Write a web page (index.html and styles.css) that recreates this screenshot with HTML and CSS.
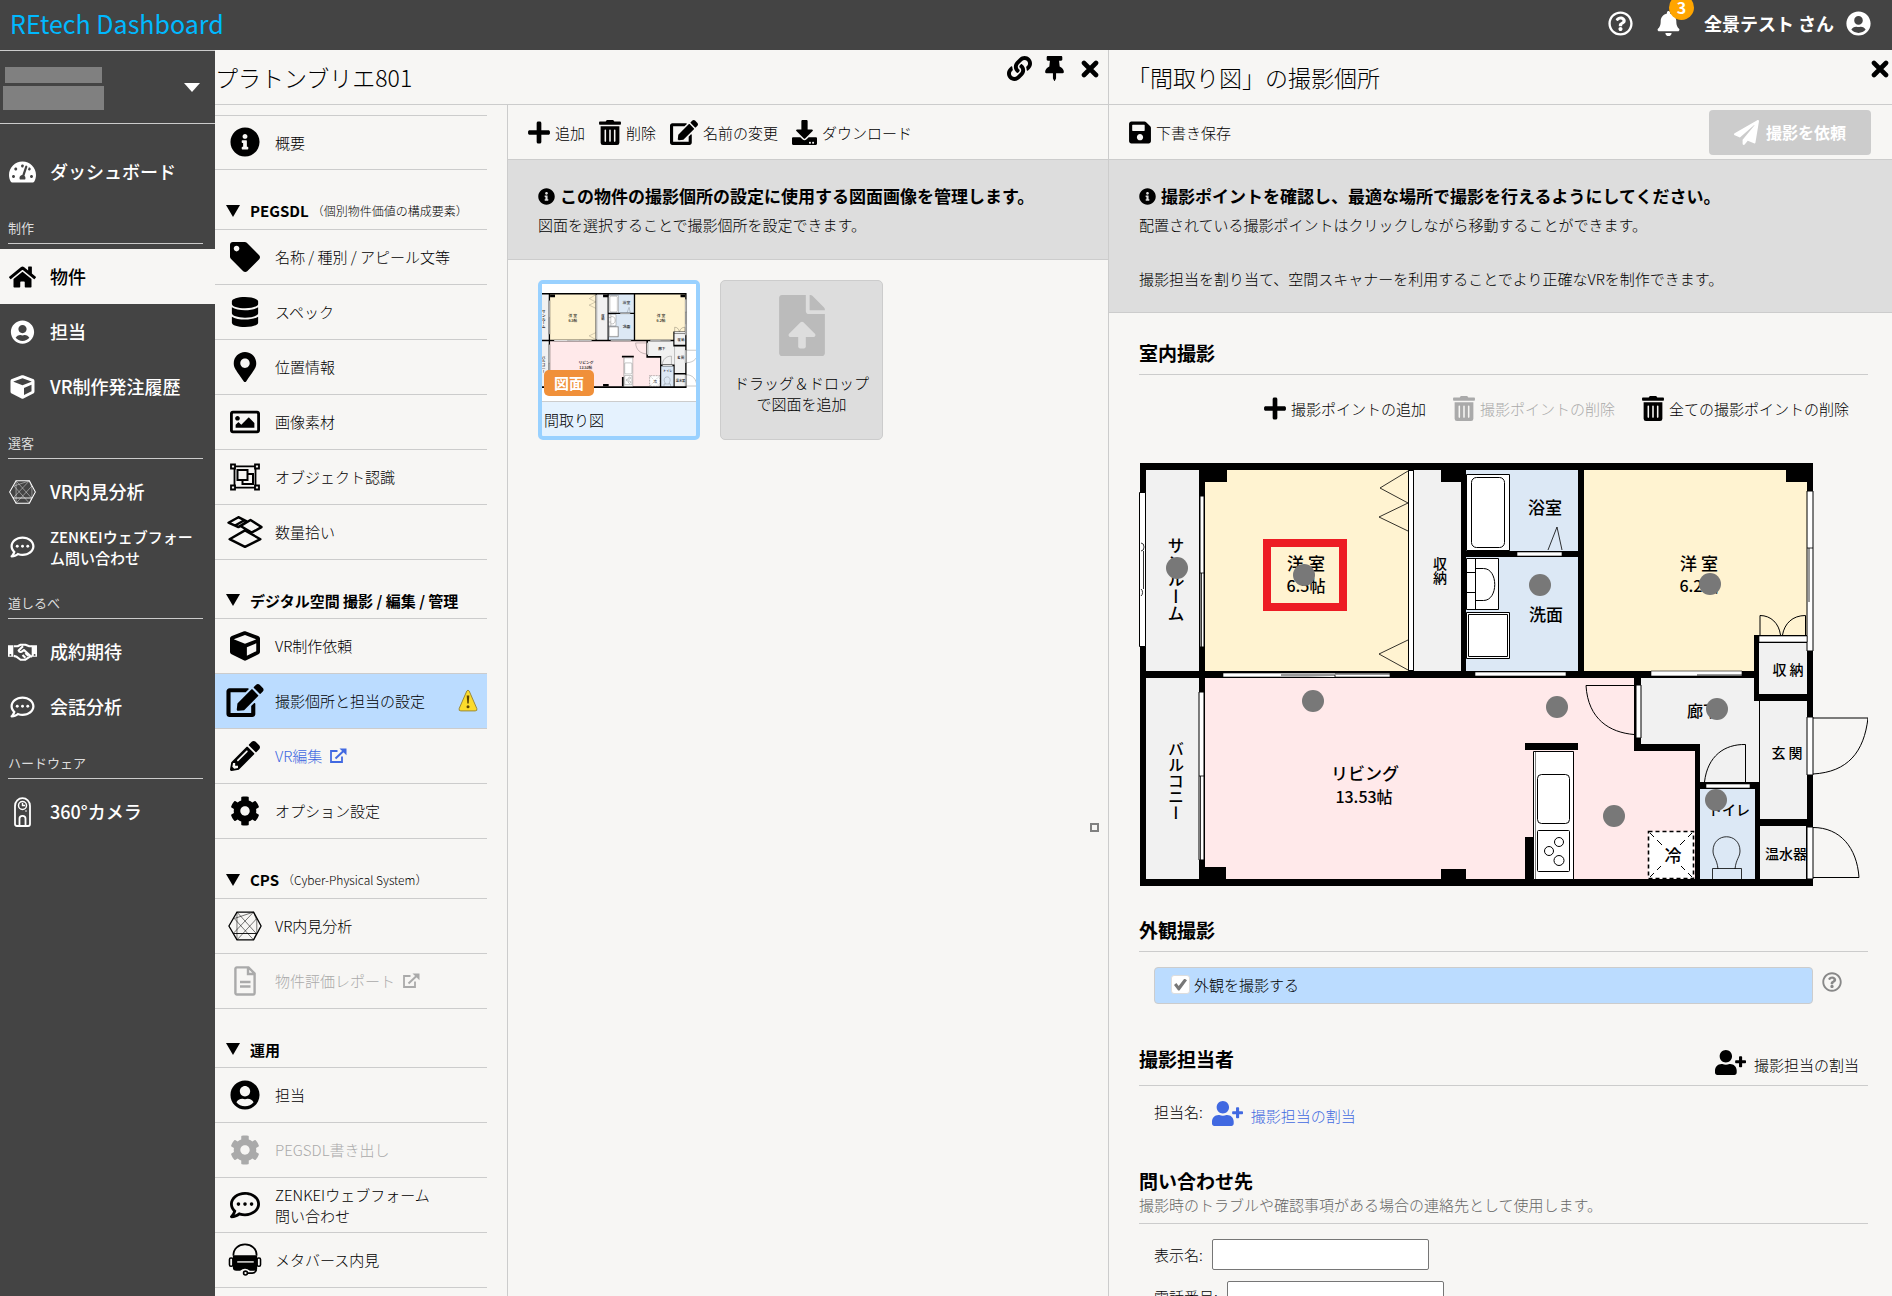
FILE: index.html
```html
<!DOCTYPE html>
<html lang="ja">
<head>
	<meta charset="UTF-8">
	<meta name="viewport" content="width=device-width, initial-scale=1">
	<title>REtech Dashboard</title>
	<link rel="stylesheet" href="styles.css">
</head>
<body>
	<!-- アイコン定義 -->
	<svg class="defs" aria-hidden="true">
		<symbol id="i-info" viewBox="0 0 512 512"><path d="M256 8C119.043 8 8 119.083 8 256c0 136.997 111.043 248 248 248s248-111.003 248-248C504 119.083 392.957 8 256 8zm0 110c23.196 0 42 18.804 42 42s-18.804 42-42 42-42-18.804-42-42 18.804-42 42-42zm56 254c0 6.627-5.373 12-12 12h-88c-6.627 0-12-5.373-12-12v-24c0-6.627 5.373-12 12-12h12v-64h-12c-6.627 0-12-5.373-12-12v-24c0-6.627 5.373-12 12-12h64c6.627 0 12 5.373 12 12v100h12c6.627 0 12 5.373 12 12v24z"/></symbol>
		<symbol id="i-tag" viewBox="0 0 512 512"><path d="M0 252.118V48C0 21.49 21.49 0 48 0h204.118a48 48 0 0 1 33.941 14.059l211.882 211.882c18.745 18.745 18.745 49.137 0 67.882L293.823 497.941c-18.745 18.745-49.137 18.745-67.882 0L14.059 286.059A48 48 0 0 1 0 252.118zM112 64c-26.51 0-48 21.49-48 48s21.49 48 48 48 48-21.49 48-48-21.49-48-48-48z"/></symbol>
		<symbol id="i-database" viewBox="0 0 448 512"><path d="M448 73.143v45.714C448 159.143 347.667 192 224 192S0 159.143 0 118.857V73.143C0 32.857 100.333 0 224 0s224 32.857 224 73.143zM448 176v102.857C448 319.143 347.667 352 224 352S0 319.143 0 278.857V176c48.125 33.143 136.208 48.572 224 48.572S399.874 209.143 448 176zm0 160v102.857C448 479.143 347.667 512 224 512S0 479.143 0 438.857V336c48.125 33.143 136.208 48.572 224 48.572S399.874 369.143 448 336z"/></symbol>
		<symbol id="i-marker" viewBox="0 0 384 512"><path d="M172.268 501.67C26.97 291.031 0 269.413 0 192 0 85.961 85.961 0 192 0s192 85.961 192 192c0 77.413-26.97 99.031-172.268 309.67-9.535 13.774-29.93 13.773-39.464 0zM192 272c44.183 0 80-35.817 80-80s-35.817-80-80-80-80 35.817-80 80 35.817 80 80 80z"/></symbol>
		<symbol id="i-image" viewBox="0 0 512 512"><path d="M464 64H48C21.49 64 0 85.49 0 112v288c0 26.51 21.49 48 48 48h416c26.51 0 48-21.49 48-48V112c0-26.51-21.49-48-48-48zm-6 336H54a6 6 0 0 1-6-6V118a6 6 0 0 1 6-6h404a6 6 0 0 1 6 6v276a6 6 0 0 1-6 6zM128 152c-22.091 0-40 17.909-40 40s17.909 40 40 40 40-17.909 40-40-17.909-40-40-40zM96 352h320v-80l-87.515-87.515c-4.686-4.686-12.284-4.686-16.971 0L192 304l-39.515-39.515c-4.686-4.686-12.284-4.686-16.971 0L96 304v48z"/></symbol>
		<symbol id="i-group" viewBox="0 0 30 30"><g fill="none" stroke="currentColor" stroke-width="1.8"><path d="M4.5 5.5v19M25.5 5.5v19M5 4.3h20M5 25.7h20"/><path d="M7.5 8h10v10h-10zM18 12h5v10H12.5v-4" stroke-width="2"/><path d="M1 2.5h4v4H1zM25 2.5h4v4h-4zM1 23.5h4v4H1zM25 23.5h4v4h-4z" fill="#f7f6f4"/></g></symbol>
		<symbol id="i-boxes" viewBox="0 0 34 30"><g fill="none" stroke="currentColor" stroke-width="2.2" stroke-linejoin="round"><path d="M2 7l9-5 8 4-8 5zM8 9.5L16 5M13 10l9-5.5L32 11l-9 5zM17 14l14 8-14 7-14-7z"/></g></symbol>
		<symbol id="i-cube" viewBox="0 0 512 512"><path d="M239.1 6.3l-208 78c-18.7 7-31.1 25-31.1 45v225.1c0 18.2 10.3 34.8 26.5 42.9l208 104c13.5 6.8 29.4 6.8 42.9 0l208-104c16.3-8.1 26.5-24.8 26.5-42.9V129.3c0-20-12.4-37.9-31.1-44.9l-208-78C262 2.2 250 2.2 239.1 6.3zM256 68.4l192 72v1.1l-192 78-192-78v-1.1l192-72zm32 356V275.5l160-65v133.9l-160 80z"/></symbol>
		<symbol id="i-edit" viewBox="0 0 576 512"><path d="M402.6 83.2l90.2 90.2c3.8 3.8 3.8 10 0 13.8L274.4 405.6l-92.8 10.3c-12.4 1.4-22.9-9.1-21.5-21.5l10.3-92.8L388.8 83.2c3.8-3.8 10-3.8 13.8 0zm162-22.9l-48.8-48.8c-15.2-15.2-39.9-15.2-55.2 0l-35.4 35.4c-3.8 3.8-3.8 10 0 13.8l90.2 90.2c3.8 3.8 10 3.8 13.8 0l35.4-35.4c15.2-15.3 15.2-40 0-55.2zM384 346.2V448H64V128h229.8c3.2 0 6.2-1.3 8.5-3.5l40-40c7.6-7.6 2.2-20.5-8.5-20.5H48C21.5 64 0 85.5 0 112v352c0 26.5 21.5 48 48 48h352c26.5 0 48-21.5 48-48V306.2c0-10.7-12.9-16-20.5-8.5l-40 40c-2.2 2.3-3.5 5.3-3.5 8.5z"/></symbol>
		<symbol id="i-pencil" viewBox="0 0 512 512"><path d="M497.9 142.1l-46.1 46.1c-4.7 4.7-12.3 4.7-17 0l-111-111c-4.7-4.7-4.7-12.3 0-17l46.1-46.1c18.7-18.7 49.1-18.7 67.9 0l60.1 60.1c18.8 18.7 18.8 49.1 0 67.9zM284.2 99.8L21.6 362.4.4 483.9c-2.9 16.4 11.4 30.6 27.8 27.8l121.5-21.3 262.6-262.6c4.7-4.7 4.7-12.3 0-17l-111-111c-4.8-4.7-12.4-4.7-17.1 0zM124.1 339.9c-5.5-5.5-5.5-14.3 0-19.8l154-154c5.5-5.5 14.3-5.5 19.8 0s5.5 14.3 0 19.8l-154 154c-5.5 5.5-14.3 5.5-19.8 0zM88 424h48v36.3l-64.5 11.3-31.1-31.1L51.7 376H88v48z"/></symbol>
		<symbol id="i-cog" viewBox="0 0 512 512"><path d="M487.4 315.7l-42.6-24.6c4.3-23.2 4.3-47 0-70.2l42.6-24.6c4.9-2.8 7.1-8.6 5.5-14-11.1-35.6-30-67.8-54.7-94.6-3.8-4.1-10-5.1-14.8-2.3L380.8 110c-17.9-15.4-38.5-27.3-60.8-35.1V25.8c0-5.6-3.9-10.5-9.4-11.7-36.7-8.2-74.3-7.8-109.2 0-5.5 1.2-9.4 6.1-9.4 11.7V75c-22.2 7.9-42.8 19.8-60.8 35.1L88.7 85.5c-4.9-2.8-11-1.9-14.8 2.3-24.7 26.7-43.6 58.9-54.7 94.6-1.7 5.4.6 11.2 5.5 14L67.3 221c-4.3 23.2-4.3 47 0 70.2l-42.6 24.6c-4.9 2.8-7.1 8.6-5.5 14 11.1 35.6 30 67.8 54.7 94.6 3.8 4.1 10 5.1 14.8 2.3l42.6-24.6c17.9 15.4 38.5 27.3 60.8 35.1v49.2c0 5.6 3.9 10.5 9.4 11.7 36.7 8.2 74.3 7.8 109.2 0 5.5-1.2 9.4-6.1 9.4-11.7v-49.2c22.2-7.9 42.8-19.8 60.8-35.1l42.6 24.6c4.9 2.8 11 1.9 14.8-2.3 24.7-26.7 43.6-58.9 54.7-94.6 1.5-5.5-.7-11.3-5.6-14.1zM256 336c-44.1 0-80-35.9-80-80s35.9-80 80-80 80 35.9 80 80-35.9 80-80 80z"/></symbol>
		<symbol id="i-user" viewBox="0 0 496 512"><path d="M248 8C111 8 0 119 0 256s111 248 248 248 248-111 248-248S385 8 248 8zm0 96c48.6 0 88 39.4 88 88s-39.4 88-88 88-88-39.4-88-88 39.4-88 88-88zm0 344c-58.7 0-111.3-26.6-146.5-68.2 18.8-35.4 55.6-59.8 98.5-59.8 2.4 0 4.8.4 7.1 1.1 13 4.2 26.6 6.9 40.9 6.9 14.3 0 28-2.7 40.9-6.9 2.3-.7 4.7-1.1 7.1-1.1 42.9 0 79.7 24.4 98.5 59.8C359.3 421.4 306.7 448 248 448z"/></symbol>
		<symbol id="i-plus" viewBox="0 0 448 512"><path d="M416 208H272V64c0-17.67-14.33-32-32-32h-32c-17.67 0-32 14.33-32 32v144H32c-17.67 0-32 14.33-32 32v32c0 17.67 14.33 32 32 32h144v144c0 17.67 14.33 32 32 32h32c17.67 0 32-14.33 32-32V304h144c17.67 0 32-14.33 32-32v-32c0-17.67-14.33-32-32-32z"/></symbol>
		<symbol id="i-trash" viewBox="0 0 448 512"><path d="M32 464a48 48 0 0 0 48 48h288a48 48 0 0 0 48-48V128H32zm272-256a16 16 0 0 1 32 0v224a16 16 0 0 1-32 0zm-96 0a16 16 0 0 1 32 0v224a16 16 0 0 1-32 0zm-96 0a16 16 0 0 1 32 0v224a16 16 0 0 1-32 0zM432 32H312l-9.4-18.7A24 24 0 0 0 281.1 0H166.8a23.72 23.72 0 0 0-21.4 13.3L136 32H16A16 16 0 0 0 0 48v32a16 16 0 0 0 16 16h416a16 16 0 0 0 16-16V48a16 16 0 0 0-16-16z"/></symbol>
		<symbol id="i-download" viewBox="0 0 512 512"><path d="M216 0h80c13.3 0 24 10.7 24 24v168h87.7c17.8 0 26.7 21.5 14.1 34.1L269.7 378.3c-7.5 7.5-19.8 7.5-27.3 0L90.1 226.1c-12.6-12.6-3.7-34.1 14.1-34.1H192V24c0-13.3 10.7-24 24-24zm296 376v112c0 13.3-10.7 24-24 24H24c-13.3 0-24-10.7-24-24V376c0-13.3 10.7-24 24-24h146.7l49 49c20.1 20.1 52.5 20.1 72.6 0l49-49H488c13.3 0 24 10.7 24 24zm-124 88c0-11-9-20-20-20s-20 9-20 20 9 20 20 20 20-9 20-20zm64 0c0-11-9-20-20-20s-20 9-20 20 9 20 20 20 20-9 20-20z"/></symbol>
		<symbol id="i-save" viewBox="0 0 448 512"><path d="M433.941 129.941l-83.882-83.882A48 48 0 0 0 316.118 32H48C21.49 32 0 53.49 0 80v352c0 26.51 21.49 48 48 48h352c26.51 0 48-21.49 48-48V163.882a48 48 0 0 0-14.059-33.941zM224 416c-35.346 0-64-28.654-64-64 0-35.346 28.654-64 64-64s64 28.654 64 64c0 35.346-28.654 64-64 64zm96-304.52V212c0 6.627-5.373 12-12 12H76c-6.627 0-12-5.373-12-12V108c0-6.627 5.373-12 12-12h228.52c3.183 0 6.235 1.264 8.485 3.515l3.48 3.48A11.996 11.996 0 0 1 320 111.48z"/></symbol>
		<symbol id="i-plane" viewBox="0 0 512 512"><path d="M476 3.2L12.5 270.6c-18.1 10.4-15.8 35.6 2.2 43.2L121 358.4l287.3-253.2c5.5-4.9 13.3 2.6 8.6 8.3L176 407v80.5c0 23.6 28.5 32.9 42.5 15.8L282 426l124.6 52.2c14.2 6 30.4-2.9 33-18.2l72-432C515 7.8 493.3-6.8 476 3.2z"/></symbol>
		<symbol id="i-home" viewBox="0 0 576 512"><path d="M280.37 148.26L96 300.11V464a16 16 0 0 0 16 16l112.06-.29a16 16 0 0 0 15.92-16V368a16 16 0 0 1 16-16h64a16 16 0 0 1 16 16v95.64a16 16 0 0 0 16 16.05L464 480a16 16 0 0 0 16-16V300L295.67 148.26a12.19 12.19 0 0 0-15.3 0zM571.6 251.47L488 182.56V44.05a12 12 0 0 0-12-12h-56a12 12 0 0 0-12 12v72.61L318.47 43a48 48 0 0 0-61 0L4.34 251.47a12 12 0 0 0-1.6 16.9l25.5 31A12 12 0 0 0 45.15 301l235.22-193.74a12.19 12.19 0 0 1 15.3 0L530.9 301a12 12 0 0 0 16.9-1.6l25.5-31a12 12 0 0 0-1.7-16.93z"/></symbol>
		<symbol id="i-meter" viewBox="0 0 576 512"><path d="M288 32C128.94 32 0 160.94 0 320c0 52.8 14.25 102.26 39.06 144.8 5.61 9.62 16.3 15.2 27.44 15.2h443c11.14 0 21.83-5.58 27.44-15.2C561.75 422.26 576 372.8 576 320c0-159.06-128.94-288-288-288zm0 64c14.71 0 26.58 10.13 30.32 23.65-1.11 2.26-2.64 4.23-3.45 6.67l-9.22 27.67c-5.13 3.49-10.97 6.01-17.64 6.01-17.67 0-32-14.33-32-32S270.33 96 288 96zM96 384c-17.67 0-32-14.33-32-32s14.33-32 32-32 32 14.33 32 32-14.33 32-32 32zm48-160c-17.67 0-32-14.33-32-32s14.33-32 32-32 32 14.33 32 32-14.33 32-32 32zm246.77-72.41l-61.33 184C343.13 347.33 352 364.54 352 384c0 11.72-3.38 22.55-8.88 32H232.88c-5.5-9.45-8.88-20.28-8.88-32 0-33.94 26.5-61.43 59.9-63.59l61.34-184.01c4.17-12.56 17.73-19.45 30.36-15.17 12.57 4.19 19.35 17.79 15.17 30.36zm14.66 57.2l15.52-46.55c3.47-1.29 7.13-2.23 11.05-2.23 17.67 0 32 14.33 32 32s-14.33 32-32 32c-11.38-.01-20.89-6.28-26.57-15.22zM480 384c-17.67 0-32-14.33-32-32s14.33-32 32-32 32 14.33 32 32-14.33 32-32 32z"/></symbol>
		<symbol id="i-comment" viewBox="0 0 512 512"><path d="M256 32C114.6 32 0 125.1 0 240c0 47.6 19.9 91.2 52.9 126.3C38 405.7 7 439.1 6.5 439.5c-6.6 7-8.4 17.2-4.6 26S14.4 480 24 480c61.5 0 110-25.7 139.1-46.3C192 442.8 223.2 448 256 448c141.4 0 256-93.1 256-208S397.4 32 256 32zm0 368c-26.7 0-53.1-4.1-78.4-12.1l-22.7-7.2-19.5 13.8c-14.3 10.1-33.9 21.4-57.5 29 7.3-12.1 14.4-25.7 19.9-40.2l10.6-28.1-20.6-21.8C69.7 314.1 48 282.2 48 240c0-88.2 93.3-160 208-160s208 71.8 208 160-93.3 160-208 160z"/><circle cx="144" cy="240" r="31"/><circle cx="256" cy="240" r="31"/><circle cx="368" cy="240" r="31"/></symbol>
		<symbol id="i-bell" viewBox="0 0 448 512"><path d="M224 512c35.32 0 63.97-28.65 63.97-64H160.03c0 35.35 28.65 64 63.97 64zm215.39-149.71c-19.32-20.76-55.47-51.99-55.47-154.29 0-77.7-54.48-139.9-127.94-155.16V32c0-17.67-14.32-32-31.98-32s-31.98 14.33-31.98 32v20.84C118.56 68.1 64.08 130.3 64.08 208c0 102.3-36.15 133.53-55.47 154.29-6 6.45-8.66 14.16-8.61 21.71.11 16.4 12.98 32 32.1 32h383.8c19.12 0 32-15.6 32.1-32 .05-7.55-2.61-15.27-8.61-21.71z"/></symbol>
		<symbol id="i-help" viewBox="0 0 512 512"><path d="M256 8C119.043 8 8 119.083 8 256c0 136.997 111.043 248 248 248s248-111.003 248-248C504 119.083 392.957 8 256 8zm0 448c-110.532 0-200-89.431-200-200 0-110.495 89.472-200 200-200 110.491 0 200 89.471 200 200 0 110.53-89.431 200-200 200zm107.244-255.2c0 67.052-72.421 68.084-72.421 92.863V300c0 6.627-5.373 12-12 12h-45.647c-6.627 0-12-5.373-12-12v-8.659c0-35.745 27.1-50.034 47.579-61.516 17.561-9.845 28.324-16.541 28.324-29.579 0-17.246-21.999-28.693-39.784-28.693-23.189 0-33.894 10.977-48.942 29.969-4.057 5.12-11.46 6.071-16.666 2.124l-27.824-21.098c-5.107-3.872-6.251-11.066-2.644-16.363C184.846 131.491 214.94 112 261.794 112c49.071 0 101.45 38.304 101.45 88.8zM298 368c0 23.159-18.841 42-42 42s-42-18.841-42-42 18.841-42 42-42 42 18.841 42 42z"/></symbol>
		<symbol id="i-pin" viewBox="0 0 384 512"><path d="M298.028 214.267L285.793 96H328c13.255 0 24-10.745 24-24V24c0-13.255-10.745-24-24-24H56C42.745 0 32 10.745 32 24v48c0 13.255 10.745 24 24 24h42.207L85.972 214.267C37.465 236.82 0 277.261 0 328c0 13.255 10.745 24 24 24h136v104.007c0 1.242.289 2.467.845 3.578l24 48c2.941 5.882 11.364 5.893 14.311 0l24-48a8.008 8.008 0 0 0 .845-3.578V352h136c13.255 0 24-10.745 24-24-.001-51.183-37.983-91.42-85.973-113.733z"/></symbol>
		<symbol id="i-times" viewBox="0 0 18 18"><path d="M3 3l12 12M15 3L3 15" fill="none" stroke="currentColor" stroke-width="4.6" stroke-linecap="round"/></symbol>
		<symbol id="i-link" viewBox="0 0 512 512"><path d="M326.612 185.391c59.747 59.809 58.927 155.698.36 214.59-.11.12-.24.25-.36.37l-67.2 67.2c-59.27 59.27-155.699 59.262-214.96 0-59.27-59.26-59.27-155.7 0-214.96l37.106-37.106c9.84-9.84 26.786-3.3 27.294 10.606.648 17.722 3.826 35.527 9.69 52.721 1.986 5.822.567 12.262-3.783 16.612l-13.087 13.087c-28.026 28.026-28.905 73.66-1.155 101.96 28.024 28.579 74.086 28.749 102.325.51l67.2-67.19c28.191-28.191 28.073-73.757 0-101.83-3.701-3.694-7.429-6.564-10.341-8.569a16.037 16.037 0 0 1-6.947-12.606c-.396-10.567 3.348-21.456 11.698-29.806l21.054-21.055c5.521-5.521 14.182-6.199 20.584-1.731a152.482 152.482 0 0 1 20.522 17.197zM467.547 44.449c-59.261-59.262-155.69-59.27-214.96 0l-67.2 67.2c-.12.12-.25.25-.36.37-58.566 58.892-59.387 154.781.36 214.59a152.454 152.454 0 0 0 20.521 17.196c6.402 4.468 15.064 3.789 20.584-1.731l21.054-21.055c8.35-8.35 12.094-19.239 11.698-29.806a16.037 16.037 0 0 0-6.947-12.606c-2.912-2.005-6.64-4.875-10.341-8.569-28.073-28.073-28.191-73.639 0-101.83l67.2-67.19c28.239-28.239 74.3-28.069 102.325.51 27.75 28.3 26.872 73.934-1.155 101.96l-13.087 13.087c-4.35 4.35-5.769 10.79-3.783 16.612 5.864 17.194 9.042 34.999 9.69 52.721.509 13.906 17.454 20.446 27.294 10.606l37.106-37.106c59.271-59.259 59.271-155.699.001-214.959z"/></symbol>
		<symbol id="i-userplus" viewBox="0 0 640 512"><path d="M624 208h-64v-64c0-8.8-7.2-16-16-16h-32c-8.8 0-16 7.2-16 16v64h-64c-8.8 0-16 7.2-16 16v32c0 8.8 7.2 16 16 16h64v64c0 8.8 7.2 16 16 16h32c8.8 0 16-7.2 16-16v-64h64c8.8 0 16-7.2 16-16v-32c0-8.8-7.2-16-16-16zm-400 48c70.7 0 128-57.3 128-128S294.7 0 224 0 96 57.3 96 128s57.3 128 128 128zm89.6 32h-16.7c-22.2 10.2-46.9 16-72.9 16s-50.6-5.8-72.9-16h-16.7C60.2 288 0 348.2 0 422.4V464c0 26.5 21.5 48 48 48h352c26.5 0 48-21.5 48-48v-41.6c0-74.2-60.2-134.4-134.4-134.4z"/></symbol>
		<symbol id="i-upload" viewBox="0 0 384 512"><path d="M224 136V0H24C10.7 0 0 10.7 0 24v464c0 13.3 10.7 24 24 24h336c13.3 0 24-10.7 24-24V160H248c-13.2 0-24-10.8-24-24zm65.18 216.01H224v80c0 8.84-7.16 16-16 16h-32c-8.84 0-16-7.16-16-16v-80H94.82c-14.28 0-21.41-17.29-11.27-27.36l96.42-95.7c6.65-6.61 17.39-6.61 24.04 0l96.42 95.7c10.15 10.07 3.03 27.36-11.25 27.36zM377 105L279.1 7c-4.5-4.5-10.6-7-17-7H256v128h128v-6.1c0-6.3-2.5-12.4-7-16.9z"/></symbol>
		<symbol id="i-external" viewBox="0 0 18 16"><path d="M8.5 3H2v11h11V8.5" fill="none" stroke="currentColor" stroke-width="1.8"/><path d="M6.5 10.5L15 2.5" stroke="currentColor" stroke-width="2"/><path d="M10.500.5H17.500V7.200z"/></symbol>
		<symbol id="i-file" viewBox="0 0 22 30"><path d="M3 1.400h11.500L20.600 7.500V27a1.500 1.500 0 0 1-1.500 1.500H3A1.500 1.500 0 0 1 1.400 27V3A1.500 1.500 0 0 1 3 1.400zM14 2v6h6M6 16h10.500M6 20.500h10.500" fill="none" stroke="currentColor" stroke-width="2.4"/></symbol>
		<symbol id="i-hex" viewBox="0 0 32 28"><g fill="none" stroke="currentColor"><path d="M8.500 1h15.500l7 13-7 13H8.500L1 14z" stroke-width="1.2"/><path d="M8.500 1v26M24 1l3 8v11l-3 7M8.500 1l18 20H5L24 1M6 7l18 20M27 7L8.500 27M24 1L6 7" stroke-width=".5"/><path d="M5 21h22" stroke-width=".7"/></g></symbol>
		<symbol id="i-hands" viewBox="0 0 30 18"><g fill="none" stroke="currentColor" stroke-width="2.2" stroke-linejoin="round"><path d="M6 3h4l3-1.500h5L22 3h3M6 13l3 1 4 3h5l5-3.500h2M15.500 3L11 7.500c1 2.500 3.500 1.500 5.500-.5l6.500 6M15 12l3 3M18 10l3 3"/></g><path d="M0 2h5.500v12H0zM24.500 2H30v12h-5.500z"/><circle cx="2.500" cy="12" r="1" fill="#444"/><circle cx="27.500" cy="12" r="1" fill="#444"/></symbol>
		<symbol id="i-camera" viewBox="0 0 18 30"><g fill="none" stroke="currentColor" stroke-width="1.8"><path d="M1.500 27V9C1.500 4.500 5 1.200 9 1.200s7.500 3.300 7.500 7.800v18c0 1.200-.6 2-2 2H3.500c-1.400 0-2-.8-2-2zM6 29v-7.500c0-3.500 6-3.500 6 0V29"/><circle cx="9" cy="8.500" r="4" stroke-width="1.5"/><path d="M9 6v2.500h2.500" stroke-width="1.4"/></g><circle cx="12.500" cy="14" r=".8"/></symbol>
		<symbol id="i-headset" viewBox="0 0 34 34"><path d="M5 13C5 5.500 10.500 1.500 17 1.500S29 5.500 29 13" fill="none" stroke="currentColor" stroke-width="1.8"/><path d="M4.500 12.500h25V27q-1.500 2-4 1.500H22q-5-4-10 0H8q-3.500 0-3.500-3z"/><rect x="1" y="15.500" width="3.500" height="8.500" rx="1.500" fill="none" stroke="currentColor" stroke-width="1.6"/><rect x="29.500" y="15.500" width="3.500" height="8.500" rx="1.500" fill="none" stroke="currentColor" stroke-width="1.6"/><path d="M9 19.500h17" stroke="#f7f6f4" stroke-width="1.4"/><path d="M28.500 27q0 4-4 4H20" fill="none" stroke="currentColor" stroke-width="1.8"/><circle cx="17.500" cy="31" r="2" fill="none" stroke="currentColor" stroke-width="1.6"/></symbol>
		<symbol id="i-warning" viewBox="0 0 20 22"><path d="M8.800 1.500q1.200-1.800 2.400 0l7.600 17.500q.8 2.400-1.600 2.400H2.800q-2.400 0-1.600-2.400z" fill="#fbdb2c" stroke="#9a8a3c"/><path d="M8.700 6h2.600l-.6 8H9.300z" fill="#5d4400"/><circle cx="10" cy="17.300" r="1.500" fill="#5d4400"/></symbol>
	</svg>

	<header class="header">
		<a class="logo" href="#">REtech Dashboard</a>
		<div class="header-menu">
			<button class="icon-btn" aria-label="ヘルプ"><svg class="i25"><use href="#i-help"/></svg></button>
			<button class="icon-btn bell" aria-label="お知らせ"><svg class="i25"><use href="#i-bell"/></svg><span class="count">3</span></button>
			<button class="account-name">全景テスト さん<svg class="i25"><use href="#i-user"/></svg></button>
		</div>
	</header>

	<div class="layout">
		<nav class="sidebar">
			<button class="company" aria-label="会社の切り替え"><span class="mask"><i class="mask-a"></i><i class="mask-b"></i></span><span class="caret"></span></button>
			<a class="side-item" href="#"><svg><use href="#i-meter"/></svg>ダッシュボード</a>
			<h2 class="side-label">制作</h2>
			<a class="side-item active" href="#"><svg><use href="#i-home"/></svg>物件</a>
			<a class="side-item" href="#"><svg><use href="#i-user"/></svg>担当</a>
			<a class="side-item" href="#"><svg><use href="#i-cube"/></svg>VR制作発注履歴</a>
			<h2 class="side-label">選客</h2>
			<a class="side-item" href="#"><svg><use href="#i-hex"/></svg>VR内見分析</a>
			<a class="side-item two-line" href="#"><svg><use href="#i-comment"/></svg><span>ZENKEIウェブフォーム問い合わせ</span></a>
			<h2 class="side-label">道しるべ</h2>
			<a class="side-item" href="#"><svg><use href="#i-hands"/></svg>成約期待</a>
			<a class="side-item" href="#"><svg><use href="#i-comment"/></svg>会話分析</a>
			<h2 class="side-label">ハードウェア</h2>
			<a class="side-item" href="#"><svg class="tall"><use href="#i-camera"/></svg>360°カメラ</a>
		</nav>

		<main class="panel">
			<div class="panel-title">
				<h1>プラトンブリエ801</h1>
				<div class="window-btns">
					<button class="icon-btn" aria-label="リンク"><svg class="i25"><use href="#i-link"/></svg></button>
					<button class="icon-btn" aria-label="固定"><svg class="i25"><use href="#i-pin"/></svg></button>
					<button class="icon-btn" aria-label="閉じる"><svg class="i18"><use href="#i-times"/></svg></button>
				</div>
			</div>
			<div class="panel-body">
				<nav class="menu">
					<a class="menu-item first" href="#"><svg><use href="#i-info"/></svg>概要</a>
					<h2 class="menu-head noted">PEGSDL<small>（個別物件価値の構成要素）</small></h2>
					<a class="menu-item" href="#"><svg><use href="#i-tag"/></svg>名称 / 種別 / アピール文等</a>
					<a class="menu-item" href="#"><svg><use href="#i-database"/></svg>スペック</a>
					<a class="menu-item" href="#"><svg><use href="#i-marker"/></svg>位置情報</a>
					<a class="menu-item" href="#"><svg><use href="#i-image"/></svg>画像素材</a>
					<a class="menu-item" href="#"><svg><use href="#i-group"/></svg>オブジェクト認識</a>
					<a class="menu-item" href="#"><svg class="big"><use href="#i-boxes"/></svg>数量拾い</a>
					<h2 class="menu-head">デジタル空間 撮影 / 編集 / 管理</h2>
					<a class="menu-item" href="#"><svg><use href="#i-cube"/></svg>VR制作依頼</a>
					<a class="menu-item active" href="#"><svg class="big"><use href="#i-edit"/></svg>撮影個所と担当の設定<svg class="warn"><use href="#i-warning"/></svg></a>
					<a class="menu-item outer" href="#"><svg><use href="#i-pencil"/></svg><span>VR編集</span><svg class="ext"><use href="#i-external"/></svg></a>
					<a class="menu-item" href="#"><svg><use href="#i-cog"/></svg>オプション設定</a>
					<h2 class="menu-head noted">CPS<small>（Cyber-Physical System）</small></h2>
					<a class="menu-item" href="#"><svg><use href="#i-hex"/></svg>VR内見分析</a>
					<a class="menu-item off" href="#" aria-disabled="true"><svg><use href="#i-file"/></svg>物件評価レポート<svg class="ext"><use href="#i-external"/></svg></a>
					<h2 class="menu-head">運用</h2>
					<a class="menu-item" href="#"><svg><use href="#i-user"/></svg>担当</a>
					<a class="menu-item off" href="#" aria-disabled="true"><svg><use href="#i-cog"/></svg>PEGSDL書き出し</a>
					<a class="menu-item" href="#"><svg><use href="#i-comment"/></svg>ZENKEIウェブフォーム<br>問い合わせ</a>
					<a class="menu-item" href="#"><svg class="big"><use href="#i-headset"/></svg>メタバース内見</a>
				</nav>
				<section class="drawings">
					<div class="toolbar">
						<button class="tool"><svg class="i22"><use href="#i-plus"/></svg>追加</button>
						<button class="tool"><svg class="i22"><use href="#i-trash"/></svg>削除</button>
						<button class="tool"><svg class="i28"><use href="#i-edit"/></svg>名前の変更</button>
						<button class="tool"><svg class="i25"><use href="#i-download"/></svg>ダウンロード</button>
					</div>
					<div class="banner">
						<strong><svg><use href="#i-info"/></svg>この物件の撮影個所の設定に使用する図面画像を管理します。</strong>
						<p>図面を選択することで撮影個所を設定できます。</p>
					</div>
					<div class="cards">
						<button class="card">
							<span class="thumb"><svg viewBox="1169 423 686 521" preserveAspectRatio="xMidYMid slice"><use href="#plan"/></svg><span class="kind">図面</span></span>
							<span class="card-name">間取り図</span>
						</button>
						<button class="drop"><svg><use href="#i-upload"/></svg>ドラッグ＆ドロップ<br>で図面を追加</button>
					</div>
					<span class="splitter"></span>
				</section>
			</div>
		</main>

		<aside class="panel">
			<div class="panel-title detail-title">
				<h1>「間取り図」の撮影個所</h1>
				<div class="window-btns">
					<button class="icon-btn" aria-label="閉じる"><svg class="i18"><use href="#i-times"/></svg></button>
				</div>
			</div>
			<div class="toolbar save-bar">
				<button class="tool"><svg class="i22"><use href="#i-save"/></svg>下書き保存</button>
				<button class="request" disabled><svg class="i25"><use href="#i-plane"/></svg>撮影を依頼</button>
			</div>
			<div class="banner">
				<strong><svg><use href="#i-info"/></svg>撮影ポイントを確認し、最適な場所で撮影を行えるようにしてください。</strong>
				<p>配置されている撮影ポイントはクリックしながら移動することができます。<br><br>撮影担当を割り当て、空間スキャナーを利用することでより正確なVRを制作できます。</p>
			</div>
			<div class="detail">
				<div class="section-head"><h2>室内撮影</h2></div>
				<div class="point-tools">
					<button class="tool"><svg class="i22"><use href="#i-plus"/></svg>撮影ポイントの追加</button>
					<button class="tool" disabled><svg class="i22"><use href="#i-trash"/></svg>撮影ポイントの削除</button>
					<button class="tool"><svg class="i22"><use href="#i-trash"/></svg>全ての撮影ポイントの削除</button>
				</div>
				<svg class="floor" viewBox="1139 463 729 423" role="img" aria-label="間取り図">
					<!-- 間取り図本体（カードのサムネイルでも使用） -->
					<g id="plan">
						<path fill="#000" d="M1140 463h673v423h-673z"/>
						<path fill="#f1f1f1" d="M1146 470h53v201h-53zM1146 678h53v201h-53zM1414 470h47v201h-47zM1759 643h48v51h-48zM1760 701h47v118h-47zM1760 826h46v53h-46zM1641 678h113v23h6v81h-60v-38h-59z"/>
						<path fill="#fff3d1" d="M1205 470h203v201h-203zM1584 470h223v165h-53v36h-170z"/>
						<path fill="#dce8f5" d="M1466 470h112v81h-112zM1466 557h112v114h-112zM1700 789h55v90h-55z"/>
						<path fill="#ffe9ea" d="M1205 678h429v73h61v128h-490z"/>
						<path fill="#000" d="M1205 470h22v12h-22zM1205 867h21v12h-21zM1441 470h25v12h-25zM1441 869h25v10h-25zM1786 470h21v12h-21zM1525 743h53v7h-53zM1525 837h8v42h-8z"/>
						<g fill="#fff" stroke="#000">
							<path d="M1139.500 492.500h6v154h-6zM1200 496h4v151h-4zM1199 692h5v168h-5zM1408.500 470.500h5v200h-5zM1807 491h6v160h-6zM1636 685h5v53h-5zM1807 717h6v58h-6zM1807 827h6v52h-6z"/>
							<path d="M1223 673h167v4h-167zM1475 672h91v4h-91zM1651 671h91v5h-91zM1517 552h45v4h-45zM1706 784h44v4h-44zM1759 636h48v6h-48z" stroke-width=".6"/>
							<path d="M1141 543a3 4 0 0 1 0 8M1141 589a3 4 0 0 1 0 7M1143.500 551v38M1200 573h4M1201.500 573v74M1199 776h5M1200.500 776v84M1281 675h54v2M1335 674h55M1807 548h6M1809 548v54M1697 675h45" stroke-width=".8"/>
							<path d="M1466.500 474.500h43v76h-43zM1466.500 558.500h32v51h-32zM1466.500 612.500h43v46h-43zM1468.500 614.500h39v42h-39z"/>
							<path d="M1475.500 558.500v51M1466.500 572.500h9M1466.500 592.500h9M1475.500 568.500h8c15 0 15 32 0 32h-8" fill="none"/>
							<rect x="1471.500" y="477.500" width="33" height="70" rx="5"/>
							<path d="M1533.500 751.500h40v128h-40z"/><path d="M1535.500 751v128" stroke-width=".5"/>
							<rect x="1537.500" y="774.500" width="32" height="49" rx="4"/>
							<rect x="1537.500" y="830.500" width="32" height="41" rx="1"/>
							<circle cx="1559" cy="842" r="4.500"/><circle cx="1549" cy="851" r="4.500"/><circle cx="1559" cy="860.500" r="5"/>
							<path d="M1648.500 831.500h45v47h-45z" stroke-width="1.600" stroke-dasharray="4 3"/>
							<path d="M1650 833l4 4M1657 840l5 5M1692 833l-4 4M1685 840l-5 5M1650 877l4-4M1657 870l4-4M1692 877l-4-4M1685 870l-4-4"/>
						</g>
						<g fill="none" stroke="#000">
							<path d="M1408 471l-28 17 28 15-29 14 29 14M1408 640l-29 14 29 16M1548 550l9-23 5 23" stroke-width=".8"/>
							<path d="M1634 685.500h-48c2 34 24 47 48 49M1760 635v-19.500c11 0 19 8 20.500 19.500M1805.500 635v-19.500c-13 0-21 8-23 19.500M1704.500 782c3-26 20-38 41-37.500V782M1813 718h55c-4 34-20 54-55 56M1813 827.500c27 0 44 20 46 50h-46M1759.500 701v81"/>
							<path d="M1718 869c-1-10-5-12-5-18 0-19 27-19 27 0 0 6-4 8-5 18M1712.500 879v-10.500h29V879" stroke-width=".8"/>
						</g>
						<g class="plan-text">
							<text class="v" x="1176" y="580">サンルーム</text>
							<text class="v small" x="1176" y="781">バルコニー</text>
							<text class="v tiny" x="1440" y="571">収納</text>
							<text x="1306" y="570">洋 室</text><text x="1306" y="592" class="small">6.5帖</text>
							<text x="1699" y="570">洋 室</text><text x="1699" y="592" class="small">6.2帖</text>
							<text x="1365" y="780">リビング</text><text x="1364" y="803" class="small">13.53帖</text>
							<text x="1545" y="514">浴室</text><text x="1546" y="621">洗面</text>
							<text x="1703" y="717" class="small">廊下</text>
							<text x="1788" y="675" class="tiny">収 納</text><text x="1787" y="758" class="tiny">玄 関</text>
							<text x="1729" y="815" class="tiny">トイレ</text><text x="1786" y="859" class="tiny">温水器</text>
							<text x="1673" y="862">冷</text>
						</g>
					</g>
					<g fill="#787878">
						<circle cx="1177" cy="568" r="11"/><circle cx="1304" cy="575" r="11"/>
						<circle cx="1313" cy="701" r="11"/><circle cx="1540" cy="585" r="11"/>
						<circle cx="1710" cy="584" r="11"/><circle cx="1557" cy="707" r="11"/>
						<circle cx="1717" cy="709" r="11"/><circle cx="1614" cy="816" r="11"/>
						<circle cx="1716" cy="800" r="11"/>
					</g>
					<rect x="1267" y="543" width="76" height="64" fill="none" stroke="#ed1c24" stroke-width="8"/>
				</svg>

				<div class="section-head outside"><h2>外観撮影</h2></div>
				<div class="outside-row">
					<label class="check"><input type="checkbox" checked>外観を撮影する</label>
					<button class="icon-btn hint" aria-label="外観撮影について"><svg><use href="#i-help"/></svg></button>
				</div>

				<div class="section-head staff">
					<h2>撮影担当者</h2>
					<button class="assign"><svg><use href="#i-userplus"/></svg>撮影担当の割当</button>
				</div>
				<div class="field staff-field"><span>担当名:</span><button class="assign blue"><svg><use href="#i-userplus"/></svg>撮影担当の割当</button></div>

				<div class="section-head contact">
					<h2>問い合わせ先</h2>
					<p>撮影時のトラブルや確認事項がある場合の連絡先として使用します。</p>
				</div>
				<div class="field"><label for="name">表示名:</label><input type="text" id="name"></div>
				<div class="field"><label for="tel">電話番号:</label><input type="tel" id="tel"></div>
			</div>
		</aside>
	</div>
</body>
</html>
```

FILE: styles.css
```css
*{
	box-sizing: border-box;
}
body{
	margin: 0;
	height: 100vh;
	display: flex;
	flex-direction: column;
	overflow: hidden;
	background: #f7f6f4;
	color: #000;
	font: 300 15px/21px "Noto Sans CJK JP", sans-serif;
}
h1, h2, p{
	margin: 0;
}
a{
	color: inherit;
	text-decoration: none;
}
button{
	margin: 0;
	padding: 0;
	border: 0;
	background: none;
	color: inherit;
	font: inherit;
	cursor: pointer;
}
svg{
	display: block;
	flex: none;
	fill: currentColor;
}
.defs{
	position: absolute;
	width: 0;
	height: 0;
}
.i18{ width: 18px; height: 18px; }
.i22{ width: 22px; height: 25px; }
.i25{ width: 25px; height: 25px; }
.i28{ width: 28px; height: 25px; }

/* header */
.header{
	flex: none;
	height: 50px;
	padding: 0 21px 0 10px;
	display: flex;
	justify-content: space-between;
	background: #444;
	color: #fff;
}
.logo{
	color: #00b9ff;
	font-size: 25px;
	font-weight: 400;
	line-height: 46px;
}
.header-menu{
	height: 47px;
	display: flex;
	align-items: center;
	gap: 23px;
}
.bell{
	position: relative;
}
.count{
	position: absolute;
	left: 13px;
	top: -16px;
	width: 25px;
	height: 25px;
	border-radius: 50%;
	background: orange;
	font-size: 16px;
	font-weight: 700;
	line-height: 25px;
	text-align: center;
}
.account-name{
	display: flex;
	align-items: center;
	gap: 12px;
	font-size: 18px;
	font-weight: 700;
}

.layout{
	flex: 1;
	min-height: 0;
	display: grid;
	grid-template-columns: 215px minmax(0, 894fr) minmax(0, 783fr);
}

/* sidebar */
.sidebar{
	background: #444;
	color: #fff;
	overflow: hidden;
}
.company{
	width: 100%;
	height: 74px;
	margin-bottom: 20px;
	padding: 0 15px 0 3px;
	display: flex;
	align-items: center;
	justify-content: space-between;
	border-top: 1px solid #ccc;
	border-bottom: 1px solid #ccc;
}
.mask i{
	display: block;
	background: #808080;
}
.mask-a{
	width: 97px;
	height: 16px;
	margin: 2px 0 3px 2px;
}
.mask-b{
	width: 101px;
	height: 24px;
}
.caret{
	border: 8px solid transparent;
	border-top: 9px solid #fff;
	border-bottom: 0;
}
.side-item{
	height: 55px;
	padding-left: 8px;
	display: flex;
	align-items: center;
	gap: 13px;
	font-size: 18px;
	font-weight: 500;
}
.side-item svg{
	width: 29px;
	height: 24px;
}
.side-item .tall{
	height: 30px;
}
.side-item.active{
	background: #f7f6f4;
	color: #000;
}
.side-item.two-line{
	padding-right: 20px;
	font-size: 15px;
}
.side-label{
	height: 45px;
	margin: 0 12px 5px 8px;
	padding-top: 18px;
	border-bottom: 1px solid #ccc;
	color: #ddd;
	font-size: 13px;
	font-weight: 400;
}

/* panels */
.panel{
	display: flex;
	flex-direction: column;
	overflow: hidden;
	border-right: 1px solid #ccc;
}
.panel:last-child{
	border-right: 0;
}
.panel-title{
	flex: none;
	height: 55px;
	padding: 0 9px 0 0;
	display: flex;
	justify-content: space-between;
	border-bottom: 1px solid #ccc;
}
.panel-title h1{
	font-size: 23px;
	font-weight: 300;
	line-height: 54px;
}
.detail-title{
	padding: 0 3px 0 18px;
}
.window-btns{
	height: 37px;
	display: flex;
	align-items: center;
	gap: 10px;
}
.window-btns .icon-btn:last-child{
	margin-left: 4px;
}
.panel-body{
	flex: 1;
	min-height: 0;
	display: flex;
}

/* menu */
.menu{
	flex: none;
	width: 293px;
	padding: 10px 20px 0 0;
	border-right: 1px solid #ccc;
	overflow: hidden;
}
.menu-item{
	height: 55px;
	padding: 0 10px 1px;
	display: flex;
	align-items: center;
	border-bottom: 1px solid #ccc;
}
.menu-item.first{
	border-top: 1px solid #ccc;
}
.menu-item svg{
	width: 40px;
	height: 30px;
	margin-right: 10px;
}
.menu-item .big{
	height: 33px;
}
.menu-item.active{
	background: #bbdcff;
}
.menu-item.off{
	color: #aaa;
}
.menu-item .ext{
	width: 18px;
	height: 16px;
	margin: 0 0 0 7px;
}
.menu-item .warn{
	width: 20px;
	height: 23px;
	margin: 0 -1px 0 auto;
}
.outer span, .outer .ext{
	color: royalblue;
}
.menu-head{
	height: 59px;
	padding: 22px 0 0 11px;
	display: flex;
	align-items: center;
	border-bottom: 1px solid #ccc;
	font-size: 15px;
	font-weight: 700;
}
.menu-head::before{
	content: '';
	margin-right: 10px;
	border: 7px solid transparent;
	border-top: 12px solid #000;
	border-bottom: 0;
}
.menu-head.noted{
	height: 60px;
}
.menu-head small{
	margin-left: 3px;
	font-size: 12px;
	font-weight: 300;
}

/* toolbar and banner */
.drawings{
	flex: 1;
	min-width: 0;
	position: relative;
}
.toolbar{
	height: 55px;
	flex: none;
	padding: 0 20px;
	display: flex;
	align-items: center;
	gap: 14px;
	border-bottom: 1px solid #ccc;
}
.save-bar{
	padding-right: 21px;
	justify-content: space-between;
}
.tool{
	display: flex;
	align-items: center;
	gap: 5px;
}
.tool:disabled{
	color: #aaa;
}
.request{
	height: 45px;
	padding: 0 25px;
	display: flex;
	align-items: center;
	gap: 7px;
	border-radius: 4px;
	background: #ccc;
	color: #fff;
	font-size: 16px;
	font-weight: 700;
}
.banner{
	flex: none;
	min-height: 100px;
	padding: 21px 30px 20px;
	background: #ddd;
	border-bottom: 1px solid #ccc;
	line-height: 27px;
}
.banner strong{
	display: flex;
	align-items: center;
	gap: 5px;
	font-size: 17px;
	font-weight: 700;
	line-height: 30px;
}
.banner svg{
	width: 17px;
	height: 17px;
}

/* drawing cards */
.cards{
	padding: 20px 30px;
	display: flex;
	gap: 20px;
}
.card{
	width: 162px;
	height: 160px;
	display: flex;
	flex-direction: column;
	border: 4px solid #99d1ff;
	border-radius: 5px;
	background: #e5f2fe;
	text-align: left;
}
.thumb{
	position: relative;
	width: 100%;
	height: 118px;
	background: #fff;
	border-bottom: 1px solid #ccc;
}
.thumb svg{
	width: 100%;
	height: 100%;
}
.kind{
	position: absolute;
	left: 2px;
	bottom: 5px;
	padding: 2px 10px 3px;
	border-radius: 5px;
	background: #f0903a;
	color: #fff;
	font-weight: 700;
}
.card-name{
	padding: 7px 2px;
}
.drop{
	width: 163px;
	height: 160px;
	padding-bottom: 12px;
	border: 1px solid #ccc;
	border-radius: 5px;
	background: #ddd;
}
.drop svg{
	width: 46px;
	height: 61px;
	margin: 0 auto 16px;
	color: #bbb;
}
.splitter{
	position: absolute;
	right: 9px;
	top: 718px;
	width: 9px;
	height: 9px;
	border: 2px solid #808080;
	background: #f7f6f4;
}

/* detail */
.detail{
	padding: 0 24px 0 30px;
}
.section-head{
	padding-bottom: 7px;
	margin-top: 26px;
	border-bottom: 1px solid #ccc;
}
.section-head h2{
	font-size: 19px;
	font-weight: 700;
	line-height: 28px;
}
.section-head p{
	color: #666;
	line-height: 20px;
}
.point-tools{
	height: 67px;
	padding-right: 19px;
	display: flex;
	align-items: center;
	justify-content: flex-end;
	gap: 27px;
}
.floor{
	width: 100%;
	margin-top: 21px;
}
.plan-text{
	fill: #000;
	font-size: 17px;
	font-weight: 500;
	text-anchor: middle;
}
.plan-text .v{
	writing-mode: vertical-rl;
}
.plan-text .small{
	font-size: 16px;
}
.plan-text .tiny{
	font-size: 14px;
}
.outside{
	margin-top: 30px;
}
.outside-row{
	margin: 15px 0 0 15px;
	display: flex;
	align-items: flex-start;
	gap: 9px;
}
.check{
	flex: 1;
	height: 37px;
	padding: 0 0 2px 16px;
	display: flex;
	align-items: center;
	gap: 4px;
	border: 1px solid #ccc;
	border-radius: 4px;
	background: #bbdcff;
}
.check input{
	appearance: none;
	width: 19px;
	height: 19px;
	margin: 0;
	display: grid;
	place-items: center;
	border: 1px solid #ddd;
	border-radius: 3px;
	background: #fff;
}
.check input:checked::before{
	content: '';
	width: 13px;
	height: 12px;
	background: #777;
	clip-path: polygon(0 55%, 18% 38%, 36% 62%, 80% 0, 100% 14%, 42% 100%, 32% 100%);
}
.hint{
	padding-top: 5px;
	margin-right: 26px;
	color: #888;
}
.hint svg{
	width: 20px;
	height: 20px;
}
.staff, .contact{
	margin-top: 41px;
}
.staff{
	padding-bottom: 10px;
	padding-right: 9px;
	display: flex;
	justify-content: space-between;
}
.assign{
	height: 30px;
	display: flex;
	align-items: flex-end;
	gap: 8px;
}
.assign svg{
	width: 31px;
	height: 25px;
}
.blue{
	color: royalblue;
}
.contact{
	padding-bottom: 8px;
}
.field{
	margin: 15px 0 -4px 15px;
	display: flex;
	align-items: center;
	gap: 9px;
}
.staff-field{
	margin-bottom: 0;
	align-items: flex-start;
}
.staff-field .assign{
	height: 25px;
}
.field input{
	width: 217px;
	height: 31px;
	border: 1px solid #767676;
	border-radius: 2px;
	background: #fff;
	font: inherit;
}
```
